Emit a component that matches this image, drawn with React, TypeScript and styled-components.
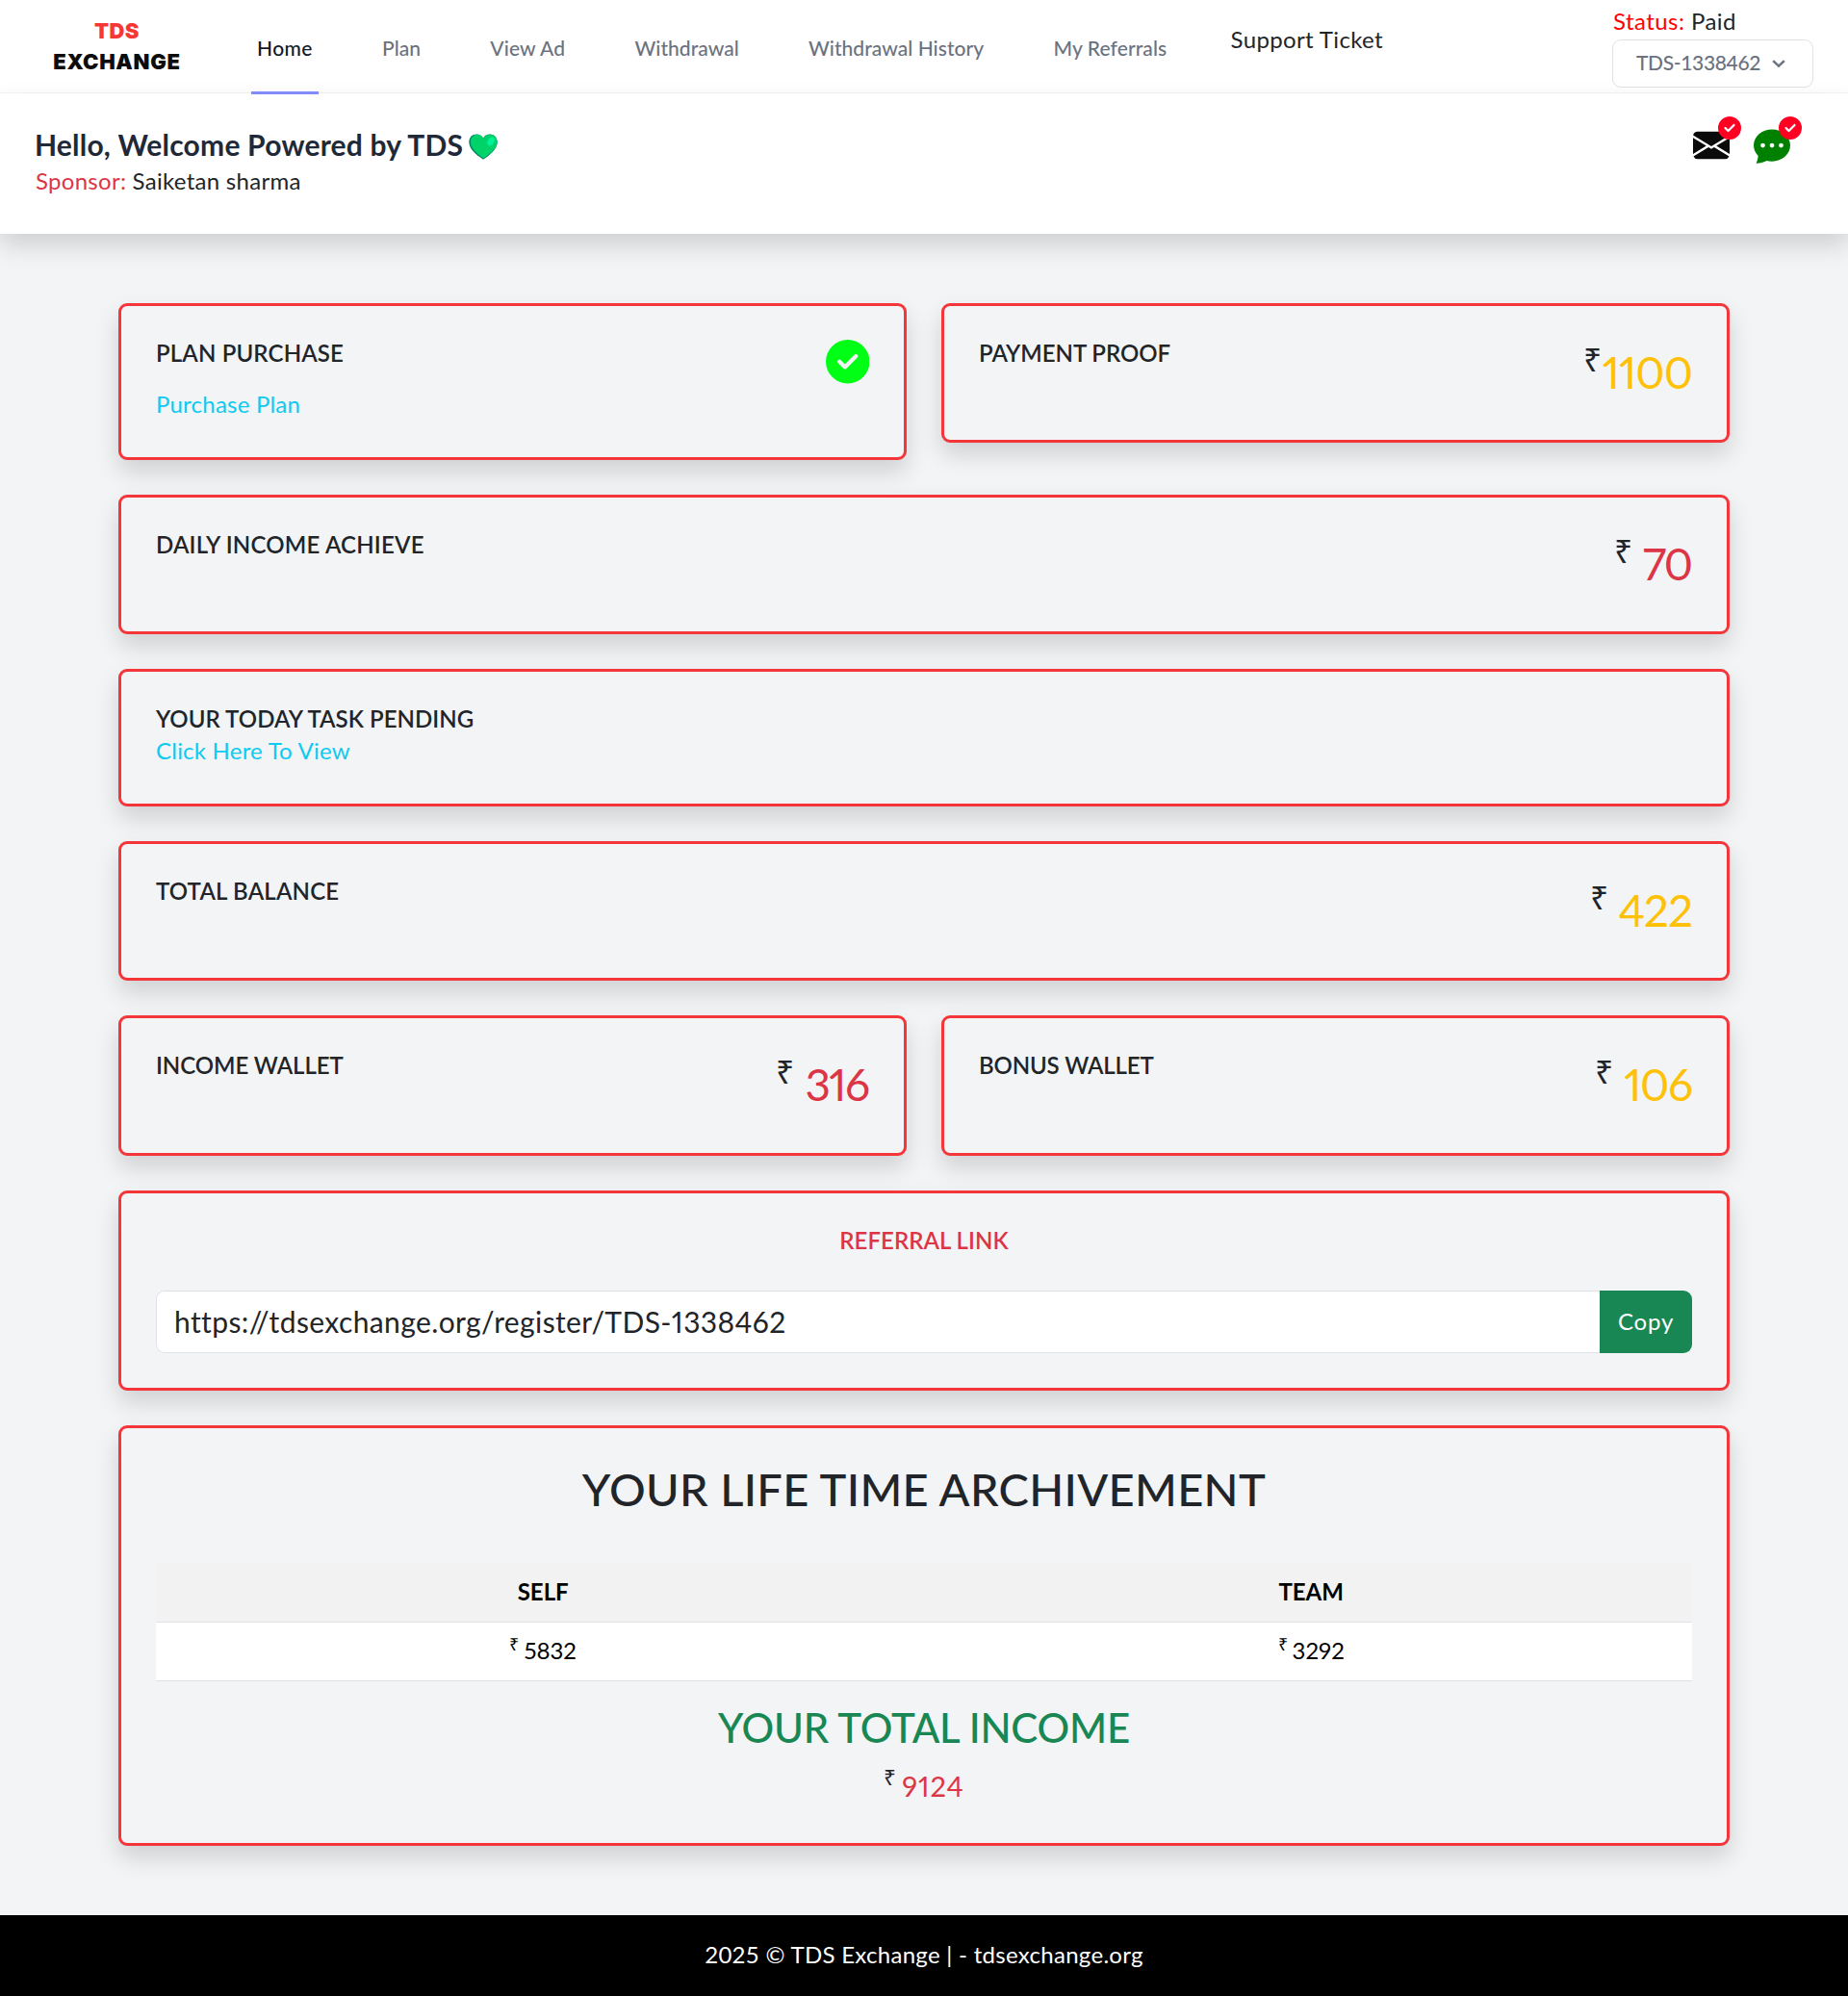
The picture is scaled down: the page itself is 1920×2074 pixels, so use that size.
import React from "react";
import styled, { createGlobalStyle } from "styled-components";
import { BsEnvelopeFill, BsChatDotsFill } from "react-icons/bs";
import { FaCircleCheck } from "react-icons/fa6";

const color = {
  ink: "#212529",
  danger: "#dc3545",
  warning: "#ffc107",
  info: "#0dcaf0",
  success: "#198754",
  frame: "#f4363a",
  page: "#f3f4f6",
};

const GlobalStyle = createGlobalStyle`
  *, *::before, *::after { box-sizing: border-box; }
  body {
    margin: 0;
    background: ${color.page};
    color: ${color.ink};
    font: 400 24px/36px Lato, sans-serif;
  }
  h1, h2, h3, p { margin: 0; font-weight: 500; }
  a { color: inherit; text-decoration: none; }
`;

/* Top navigation */
const Nav = styled.nav`
  display: flex;
  align-items: flex-start;
  height: 97px;
  padding: 0 36px 0 55px;
  background: #fff;
  border-bottom: 1px solid #f3f4f6;
`;

const Logo = styled.div`
  width: 133px;
  padding-top: 16px;
  font: 900 22px/32px Inter, sans-serif;
  text-align: center;
  color: #0c0c0c;
  letter-spacing: 0.7px;
  white-space: nowrap;
`;

const LogoAccent = styled.div`
  color: #f93636;
  letter-spacing: 0.4px;
`;

const Links = styled.div`
  display: flex;
  gap: 60.3px;
  margin-left: 73px;
`;

const NavLink = styled.a<{ $active?: boolean; $track?: number }>`
  position: relative;
  z-index: 1;
  height: 98px;
  padding: 34px 6px 0;
  border-bottom: 3px solid ${(p) => (p.$active ? "#818cf8" : "transparent")};
  color: ${(p) => (p.$active ? "#111827" : "#6b7280")};
  font-size: 21px;
  font-weight: 500;
  line-height: 31px;
  letter-spacing: ${(p) => p.$track ?? 0}px;
  white-space: nowrap;
`;

const SupportLink = styled.a`
  padding-top: 23px;
  letter-spacing: 0.35px;
`;

const Account = styled.div`
  display: flex;
  flex-direction: column;
  width: 209px;
  margin-left: auto;
  padding-top: 4px;
`;

const Status = styled.div`
  padding-left: 1px;
  letter-spacing: 0.45px;
`;

const StatusLabel = styled.span`
  color: #ff0000;
`;

const AccountButton = styled.button`
  display: flex;
  align-items: flex-start;
  gap: 12px;
  height: 50px;
  margin-top: 1px;
  padding: 8px 24px;
  border: 1px solid #e0e2e6;
  border-radius: 9px;
  background: #fff;
  color: #6b7280;
  font: 500 21px/30px Lato, sans-serif;
  letter-spacing: -0.35px;
`;

const Chevron = styled.svg`
  width: 14px;
  height: 8px;
  margin-top: 12px;
`;

/* Welcome banner */
const Banner = styled.header`
  position: relative;
  display: flex;
  justify-content: space-between;
  height: 146px;
  padding: 35px 60px 0 36px;
  background: #fff;
  box-shadow: 0 12px 24px rgba(0, 0, 0, 0.15);
`;

const Greeting = styled.h2`
  display: flex;
  font-size: 30px;
  font-weight: 700;
  line-height: 37px;
  letter-spacing: 0.21px;
  color: #1f2937;
`;

const Heart = styled.svg`
  width: 30px;
  height: 27px;
  margin: 7px 0 0 6px;
`;

const Sponsor = styled.div`
  padding-left: 1px;
  line-height: 37px;
  letter-spacing: 0.28px;
`;

const SponsorLabel = styled.span`
  color: ${color.danger};
`;

const Alerts = styled.div`
  display: flex;
  gap: 25px;
`;

const Alert = styled.a<{ $tint: string }>`
  position: relative;
  width: 38px;
  height: 38px;
  color: ${(p) => p.$tint};
  svg { display: block; }
`;

const AlertBadge = styled.span`
  position: absolute;
  left: 26px;
  top: -11px;
  color: #ff0022;
`;

/* Cards */
const Main = styled.main`
  display: flex;
  flex-direction: column;
  gap: 36px;
  padding: 72px 123px;
`;

const Pair = styled.div`
  display: grid;
  grid-template-columns: 1fr 1fr;
  align-items: start;
  gap: 36px;
`;

const Card = styled.section<{ $height: number }>`
  display: flex;
  justify-content: space-between;
  align-items: flex-start;
  height: ${(p) => p.$height}px;
  padding: 36px;
  border: 3px solid ${color.frame};
  border-radius: 9px;
  background: ${color.page};
  box-shadow: 0 12px 24px rgba(0, 0, 0, 0.15);
`;

const StackCard = styled(Card)`
  flex-direction: column;
  justify-content: flex-start;
  align-items: stretch;
  text-align: center;
`;

const CardTitle = styled.h3<{ $track?: number }>`
  font-size: 24px;
  font-weight: 600;
  line-height: 26px;
  letter-spacing: ${(p) => p.$track ?? 0}px;
`;

const CardLink = styled.a<{ $gap: number }>`
  display: block;
  margin-top: ${(p) => p.$gap}px;
  line-height: 36px;
  letter-spacing: 0.22px;
  color: ${color.info};
`;

const PaidMark = styled.span`
  margin-top: -1px;
  color: #00ff15;
  svg { display: block; }
`;

const Amount = styled.div`
  display: flex;
  align-items: flex-start;
`;

const Rupee = styled.span<{ $size: number; $line: number }>`
  font-family: "Open Sans", sans-serif;
  font-size: ${(p) => p.$size}px;
  line-height: ${(p) => p.$line}px;
`;

const Figure = styled.span<{ $tone: string; $track: number; $gap: number }>`
  margin-left: ${(p) => p.$gap}px;
  margin-right: ${(p) => -p.$track - 1}px;
  color: ${(p) => p.$tone};
  font-size: 46px;
  line-height: 65px;
  font-variant-numeric: proportional-nums;
  letter-spacing: ${(p) => p.$track}px;
`;

/* Referral */
const ReferralTitle = styled(CardTitle)`
  color: ${color.danger};
`;

const CopyGroup = styled.div`
  display: flex;
  height: 65px;
  margin-top: 39px;
`;

const LinkField = styled.input`
  flex: 1;
  min-width: 0;
  padding: 0 18px 2px;
  border: 1px solid #dee2e6;
  border-right: 0;
  border-radius: 9px 0 0 9px;
  outline: 0;
  background: #fff;
  color: ${color.ink};
  font: 400 30px Lato, sans-serif;
  font-variant-numeric: proportional-nums;
  letter-spacing: 0.39px;
`;

const CopyButton = styled.button`
  width: 96px;
  padding: 0 0 2px;
  border: 0;
  border-radius: 0 9px 9px 0;
  background: ${color.success};
  color: #fff;
  font: 400 24px Lato, sans-serif;
  letter-spacing: 0.8px;
`;

/* Lifetime totals */
const BigTitle = styled.h1`
  font-size: 47px;
  line-height: 54px;
  letter-spacing: 0.33px;
`;

const Table = styled.table`
  width: 100%;
  margin-top: 50px;
  border-collapse: collapse;
  table-layout: fixed;
  color: #000;
`;

const HeadCell = styled.th`
  height: 61px;
  padding: 0 0 1px;
  border-bottom: 1px solid #dee2e6;
  background: #f2f2f2;
  font-weight: 700;

  &:first-child { width: 50.4%; }
`;

const Cell = styled.td`
  height: 61px;
  padding: 0;
  border-bottom: 1px solid #dee2e6;
  background: #fff;
`;

const CellAmount = styled.div`
  display: flex;
  justify-content: center;
  gap: 5px;
  margin-top: -1px;
  font-variant-numeric: proportional-nums;
`;

const IncomeTitle = styled.h2`
  margin-top: 23px;
  color: ${color.success};
  font-size: 42px;
  line-height: 50px;
  letter-spacing: -0.2px;
`;

const IncomeTotal = styled.div`
  display: flex;
  justify-content: center;
  gap: 6px;
  margin-top: 16px;
  font-size: 29px;
  line-height: 40px;
  font-variant-numeric: proportional-nums;
`;

const IncomeValue = styled.span`
  color: ${color.danger};
  letter-spacing: 0.9px;
`;

const Footer = styled.footer`
  display: flex;
  justify-content: center;
  align-items: center;
  height: 84px;
  padding-bottom: 2px;
  background: #000;
  color: #fff;
  letter-spacing: 0.29px;
`;

function Money({ value, tone, track, gap }: { value: string; tone: string; track: number; gap: number }) {
  return (
    <Amount>
      <Rupee $size={33.6} $line={38}>₹</Rupee>
      <Figure $tone={tone} $track={track} $gap={gap}>{value}</Figure>
    </Amount>
  );
}

const links = [
  { label: "Home", active: true, track: 0.4 },
  { label: "Plan", track: 0 },
  { label: "View Ad", track: 0.12 },
  { label: "Withdrawal", track: 0.03 },
  { label: "Withdrawal History", track: 0.04 },
  { label: "My Referrals", track: 0.1 },
];

export default function App() {
  return (
    <>
      <GlobalStyle />
      <Nav>
        <Logo>
          <LogoAccent>TDS</LogoAccent>
          EXCHANGE
        </Logo>
        <Links>
          {links.map((l) => (
            <NavLink key={l.label} $active={l.active} $track={l.track}>{l.label}</NavLink>
          ))}
          <SupportLink>Support Ticket</SupportLink>
        </Links>
        <Account>
          <Status><StatusLabel>Status:</StatusLabel> Paid</Status>
          <AccountButton>
            TDS-1338462
            <Chevron viewBox="0 0 14 8" fill="none" stroke="currentColor" strokeWidth="2.5">
              <path d="M1.2 1.2 7 6.6l5.800-5.400" />
            </Chevron>
          </AccountButton>
        </Account>
      </Nav>
      <Banner>
        <div>
          <Greeting>
            Hello, Welcome Powered by TDS
            <Heart viewBox="0 0 30 27">
              <path fill="#008463" d="M8 .5C3.500.5.3 4 .3 8.600.3 16.500 8.200 22 15 26.800 21.800 22 29.700 16.500 29.700 8.600 29.700 4 26.500.5 22 .5c-3 0-5.600 1.600-7 4C13.600 2.100 11 .5 8 .5Z" />
              <path fill="#00d26a" d="M9 .8C5 .8 1.800 4 1.800 8.300c0 7.200 7 12.400 13.600 17.200 6.800-4.800 14.200-9.900 14.200-17.200C29.600 4 26.500.8 22.300.8c-3 0-5.800 1.700-7.100 4.300C14 2.500 12 .8 9 .8Z" />
              <ellipse cx="23" cy="8" rx="3.200" ry="4.700" transform="rotate(28 23 8)" fill="#00f397" />
            </Heart>
          </Greeting>
          <Sponsor><SponsorLabel>Sponsor:</SponsorLabel> Saiketan sharma</Sponsor>
        </div>
        <Alerts>
          <Alert $tint="#0a0a0a">
            <BsEnvelopeFill size={38} />
            <AlertBadge><FaCircleCheck size={24} /></AlertBadge>
          </Alert>
          <Alert $tint="#008000">
            <BsChatDotsFill size={38} />
            <AlertBadge><FaCircleCheck size={24} /></AlertBadge>
          </Alert>
        </Alerts>
      </Banner>

      <Main>
        <Pair>
          <Card $height={163}>
            <div>
              <CardTitle $track={0.15}>PLAN PURCHASE</CardTitle>
              <CardLink $gap={22}>Purchase Plan</CardLink>
            </div>
            <PaidMark><FaCircleCheck size={45.5} /></PaidMark>
          </Card>
          <Card $height={145}>
            <CardTitle $track={-0.05}>PAYMENT PROOF</CardTitle>
            <Money value="1100" tone={color.warning} track={-0.9} gap={1} />
          </Card>
        </Pair>
        <Card $height={145}>
          <CardTitle $track={0.2}>DAILY INCOME ACHIEVE</CardTitle>
          <Money value="70" tone={color.danger} track={-2.3} gap={11} />
        </Card>
        <Card $height={143}>
          <div>
            <CardTitle $track={0.05}>YOUR TODAY TASK PENDING</CardTitle>
            <CardLink $gap={2}>Click Here To View</CardLink>
          </div>
        </Card>
        <Card $height={145}>
          <CardTitle $track={0.18}>TOTAL BALANCE</CardTitle>
          <Money value="422" tone={color.warning} track={-0.9} gap={11} />
        </Card>
        <Pair>
          <Card $height={146}>
            <CardTitle $track={-0.07}>INCOME WALLET</CardTitle>
            <Money value="316" tone={color.danger} track={-1.6} gap={11} />
          </Card>
          <Card $height={146}>
            <CardTitle $track={-0.14}>BONUS WALLET</CardTitle>
            <Money value="106" tone={color.warning} track={-1.4} gap={11} />
          </Card>
        </Pair>
        <StackCard $height={208}>
          <ReferralTitle $track={0.02}>REFERRAL LINK</ReferralTitle>
          <CopyGroup>
            <LinkField readOnly value="https://tdsexchange.org/register/TDS-1338462" />
            <CopyButton>Copy</CopyButton>
          </CopyGroup>
        </StackCard>
        <StackCard $height={437}>
          <BigTitle>YOUR LIFE TIME ARCHIVEMENT</BigTitle>
          <Table>
            <thead>
              <tr>
                <HeadCell>SELF</HeadCell>
                <HeadCell>TEAM</HeadCell>
              </tr>
            </thead>
            <tbody>
              <tr>
                {["5832", "3292"].map((v) => (
                  <Cell key={v}>
                    <CellAmount><Rupee $size={18} $line={22}>₹</Rupee>{v}</CellAmount>
                  </Cell>
                ))}
              </tr>
            </tbody>
          </Table>
          <IncomeTitle>YOUR TOTAL INCOME</IncomeTitle>
          <IncomeTotal>
            <Rupee $size={22.5} $line={22}>₹</Rupee>
            <IncomeValue>9124</IncomeValue>
          </IncomeTotal>
        </StackCard>
      </Main>
      <Footer>2025 © TDS Exchange | - tdsexchange.org</Footer>
    </>
  );
}
